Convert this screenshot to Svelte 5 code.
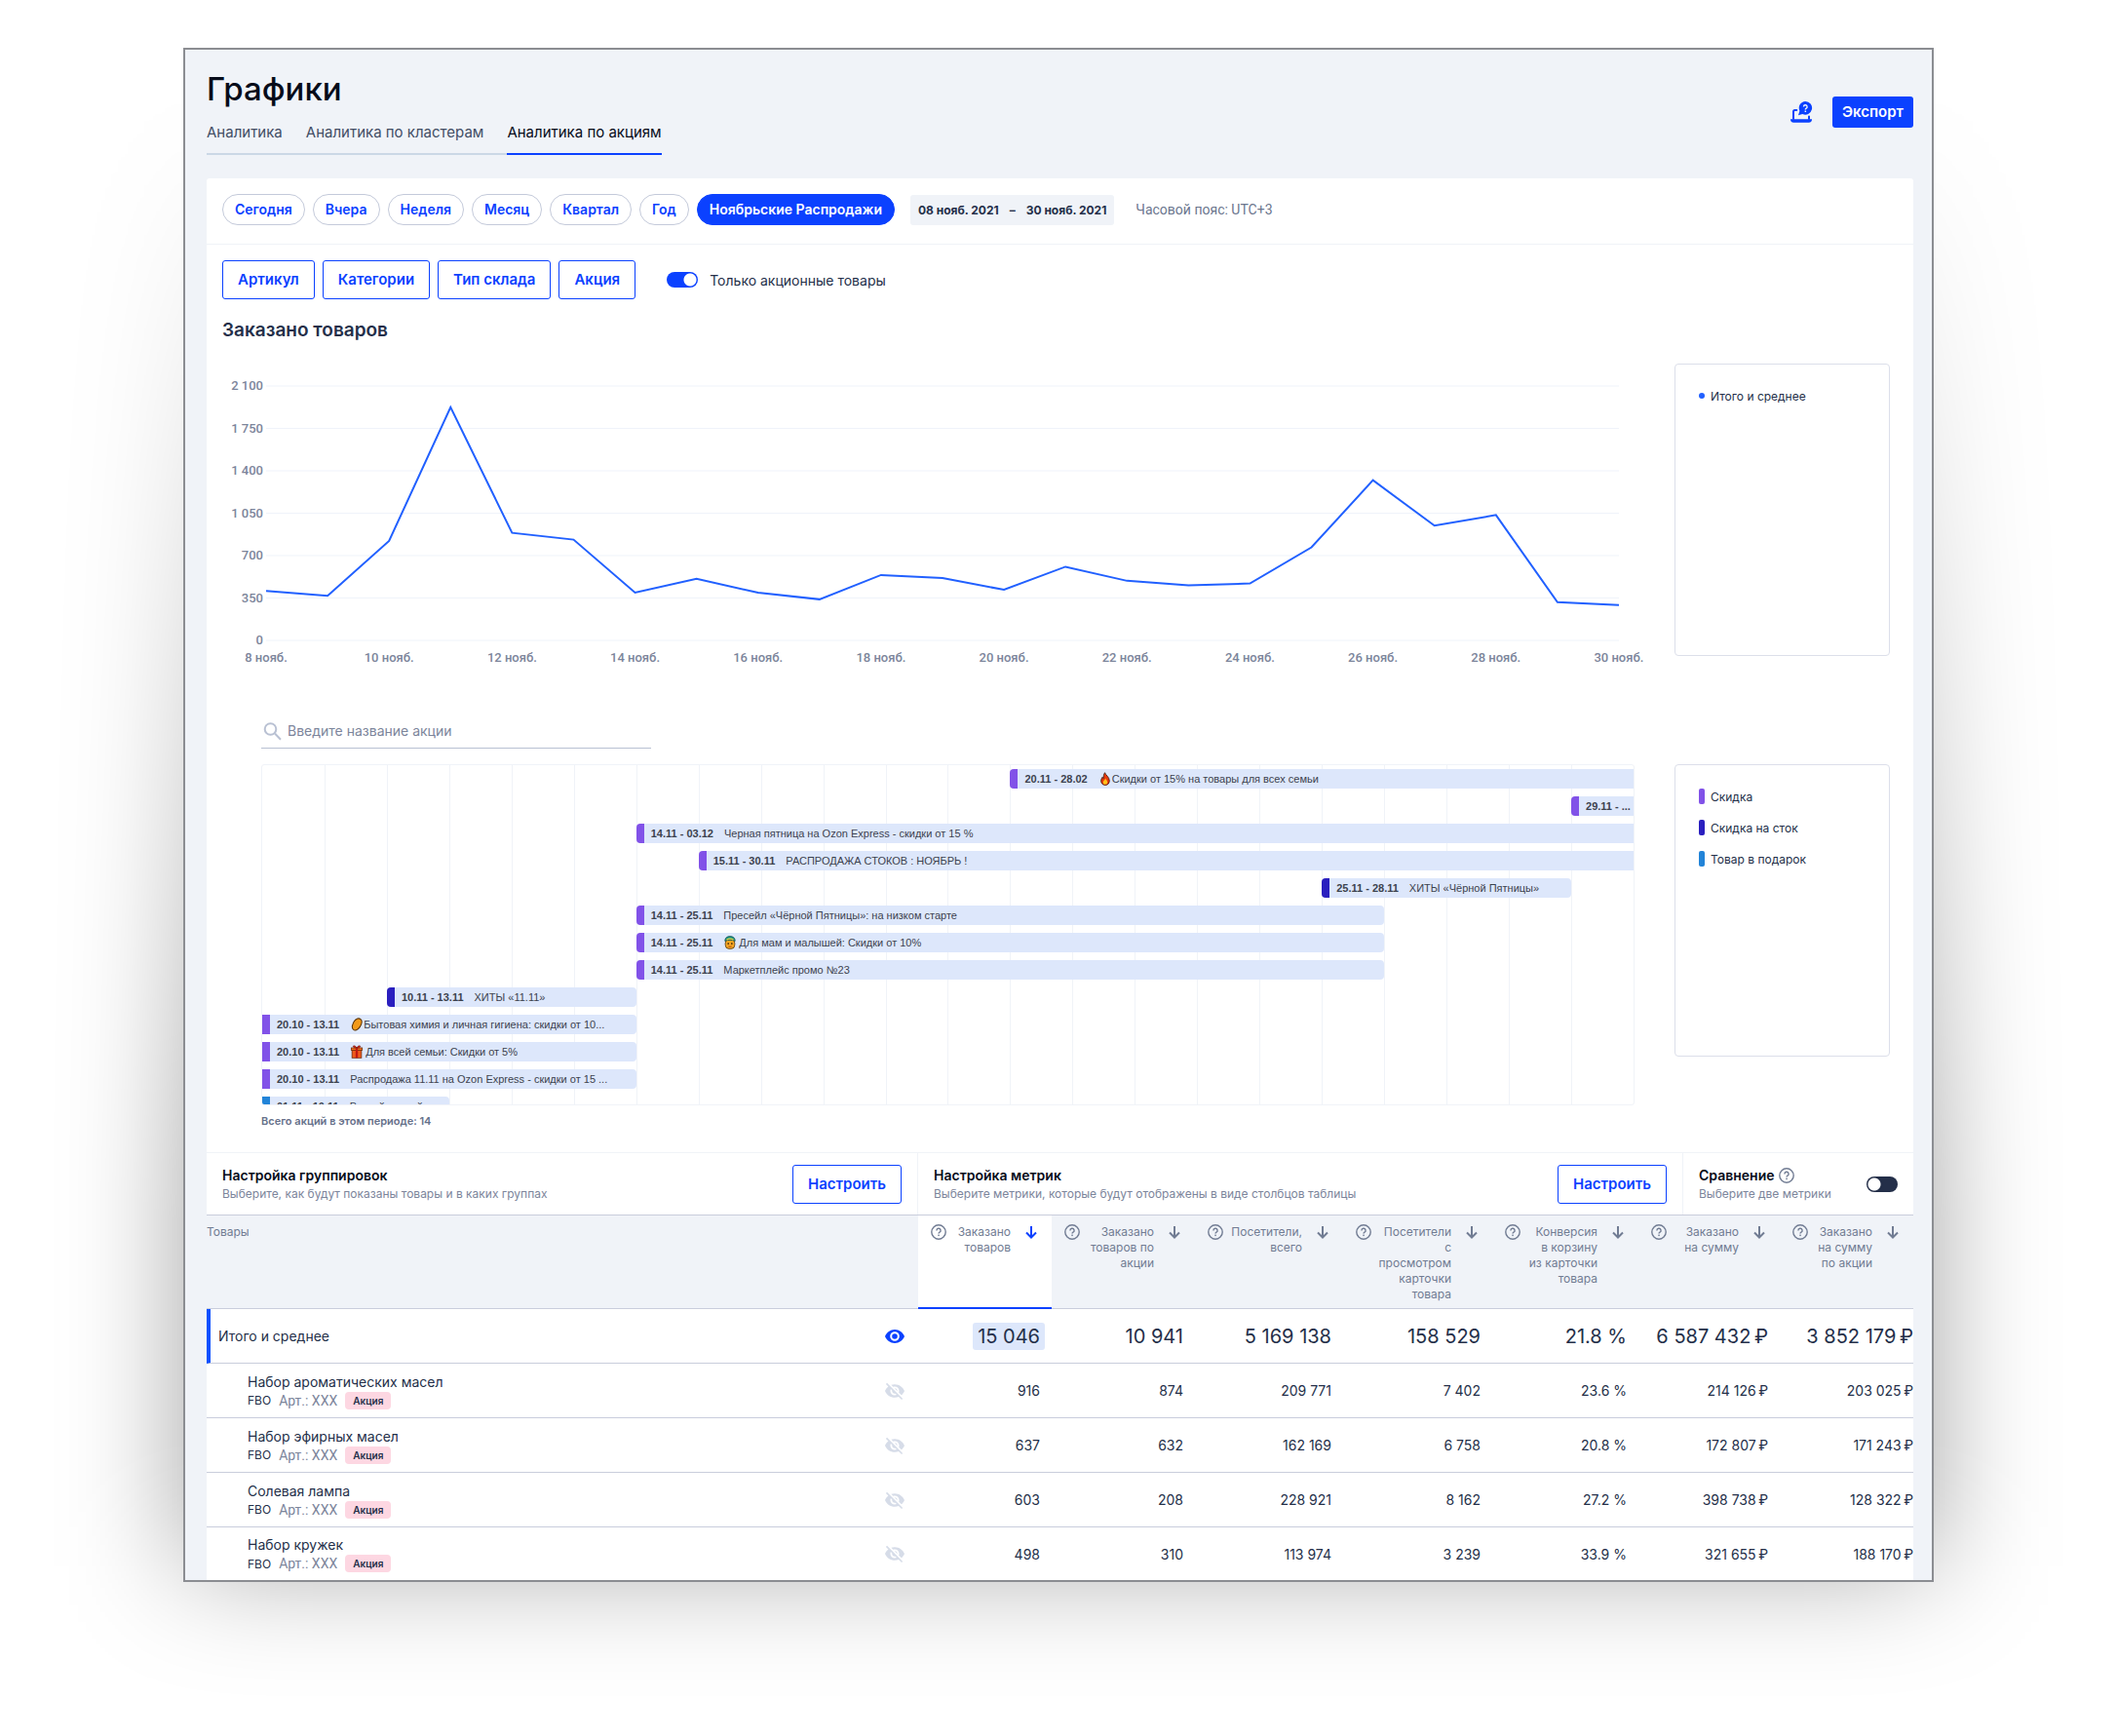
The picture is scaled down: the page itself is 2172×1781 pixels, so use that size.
<script lang="ts">
    type Kind = "sale" | "stock" | "gift";

    interface Promo {
        dates: string;
        name: string;
        from: number;
        to: number;
        kind: Kind;
        emoji?: string;
        cutLeft?: boolean;
        cutRight?: boolean;
    }

    const tabs = ["Аналитика", "Аналитика по кластерам", "Аналитика по акциям"];
    let activeTab = $state(2);

    const periods = ["Сегодня", "Вчера", "Неделя", "Месяц", "Квартал", "Год", "Ноябрьские Распродажи"];
    let activePeriod = $state(6);

    const filters = ["Артикул", "Категории", "Тип склада", "Акция"];
    let promoOnly = $state(true);
    let compare = $state(false);
    let search = $state("");

    // orders per day, 8–30 November
    const orders = [
        408, 368, 821, 1925, 888, 832, 395, 508, 394, 339, 540, 514,
        418, 608, 492, 454, 470, 768, 1322, 947, 1035, 315, 291,
    ];
    const maxOrders = 2100;
    const yTicks = ["2 100", "1 750", "1 400", "1 050", "700", "350", "0"];
    const xTicks = Array.from({ length: 12 }, (_, i) => `${8 + i * 2} нояб.`);
    const linePoints = orders
        .map((v, i) => `${(i / (orders.length - 1)) * 1000},${(1 - v / maxOrders) * 261}`)
        .join(" ");

    // from / to are grid lines, one column per day
    const promos: Promo[] = [
        { dates: "20.11 - 28.02", name: "Скидки от 15% на товары для всех семьи", from: 13, to: 23, kind: "sale", emoji: "fire", cutRight: true },
        { dates: "29.11 - ...", name: "", from: 22, to: 23, kind: "sale", cutRight: true },
        { dates: "14.11 - 03.12", name: "Черная пятница на Ozon Express - скидки от 15 %", from: 7, to: 23, kind: "sale", cutRight: true },
        { dates: "15.11 - 30.11", name: "РАСПРОДАЖА СТОКОВ : НОЯБРЬ !", from: 8, to: 23, kind: "sale", cutRight: true },
        { dates: "25.11 - 28.11", name: "ХИТЫ «Чёрной Пятницы»", from: 18, to: 22, kind: "stock" },
        { dates: "14.11 - 25.11", name: "Пресейл «Чёрной Пятницы»: на низком старте", from: 7, to: 19, kind: "sale" },
        { dates: "14.11 - 25.11", name: "Для мам и малышей: Скидки от 10%", from: 7, to: 19, kind: "sale", emoji: "baby" },
        { dates: "14.11 - 25.11", name: "Маркетплейс промо №23", from: 7, to: 19, kind: "sale" },
        { dates: "10.11 - 13.11", name: "ХИТЫ «11.11»", from: 3, to: 7, kind: "stock" },
        { dates: "20.10 - 13.11", name: "Бытовая химия и личная гигиена: скидки от 10...", from: 1, to: 7, kind: "sale", emoji: "soap", cutLeft: true },
        { dates: "20.10 - 13.11", name: "Для всей семьи: Скидки от 5%", from: 1, to: 7, kind: "sale", emoji: "gift", cutLeft: true },
        { dates: "20.10 - 13.11", name: "Распродажа 11.11 на Ozon Express - скидки от 15 ...", from: 1, to: 7, kind: "sale", cutLeft: true },
        { dates: "01.11 - 10.11", name: "Второй пресейл", from: 1, to: 4, kind: "gift", cutLeft: true },
    ];

    const kinds: { kind: Kind; label: string }[] = [
        { kind: "sale", label: "Скидка" },
        { kind: "stock", label: "Скидка на сток" },
        { kind: "gift", label: "Товар в подарок" },
    ];

    const metrics = [
        { title: "Заказано\nтоваров", width: 137 },
        { title: "Заказано\nтоваров по\nакции", width: 147 },
        { title: "Посетители,\nвсего", width: 152 },
        { title: "Посетители\nс\nпросмотром\nкарточки\nтовара", width: 153 },
        { title: "Конверсия\nв корзину\nиз карточки\nтовара", width: 150 },
        { title: "Заказано\nна сумму", width: 145 },
        { title: "Заказано\nна сумму\nпо акции", width: 137 },
    ];

    // thin space before the currency sign
    const rub = (value: string) => `${value}\u2009₽`;

    const totals = ["15 046", "10 941", "5 169 138", "158 529", "21.8 %", rub("6 587 432"), rub("3 852 179")];

    const products = [
        { name: "Набор ароматических масел", values: ["916", "874", "209 771", "7 402", "23.6 %", rub("214 126"), rub("203 025")] },
        { name: "Набор эфирных масел", values: ["637", "632", "162 169", "6 758", "20.8 %", rub("172 807"), rub("171 243")] },
        { name: "Солевая лампа", values: ["603", "208", "228 921", "8 162", "27.2 %", rub("398 738"), rub("128 322")] },
        { name: "Набор кружек", values: ["498", "310", "113 974", "3 239", "33.9 %", rub("321 655"), rub("188 170")] },
    ];
</script>

{#snippet helpIcon()}
    <svg class="help" viewBox="0 0 16 16" aria-hidden="true">
        <circle cx="8" cy="8" r="7.2" fill="none" stroke="currentColor" stroke-width="1.4" />
        <path d="M5.9 6.4a2.1 2.1 0 1 1 3.1 1.8c-.7.4-1 .7-1 1.4" fill="none" stroke="currentColor" stroke-width="1.4" />
        <rect x="7.3" y="10.6" width="1.5" height="1.5" fill="currentColor" />
    </svg>
{/snippet}

{#snippet emojiIcon(name: string)}
    <svg class="emoji {name}" viewBox="0 0 16 16" aria-hidden="true">
        {#if name === "fire"}
            <path d="M7.5.8c.6 2.6 5.4 5 5.4 9.4 0 3-2 5.2-4.9 5.2s-5-2.1-5-5c0-2 1-3.2 1.7-4.4.3 1 .7 1.5 1.3 1.7C5.7 5 6.2 2.6 7.5.8z" fill="#e8380c" stroke="#3a1408" stroke-width=".9" />
            <path d="M8.2 7.5c.5 1.6 2.3 2.5 2.3 4.6 0 1.5-1 2.6-2.5 2.6s-2.5-1-2.5-2.5c0-1.8 2-2.5 2.7-4.7z" fill="#ffc21c" />
        {:else if name === "baby"}
            <rect x="2.5" y="4" width="11" height="11.3" rx="4.5" fill="#f6a623" stroke="#4a3210" stroke-width=".9" />
            <path d="M2 6.2C2 2.5 4.5.7 8 .7s6 1.8 6 5.5c-3.5-1.6-8.5-1.6-12 0z" fill="#1f9a8c" stroke="#174b45" stroke-width=".8" />
            <path d="M4 4.7c2.5-1.3 5.5-1.3 8 0" fill="none" stroke="#e7d23c" stroke-width="1.4" />
            <circle cx="5.9" cy="9.2" r="1" fill="#3a2308" />
            <circle cx="10.1" cy="9.2" r="1" fill="#3a2308" />
            <path d="M6.2 12.3c1.2.8 2.4.8 3.6 0" fill="none" stroke="#a0350a" stroke-width="1" />
        {:else if name === "soap"}
            <path d="M2.8 9.7C3.6 6.300 6.300 2.200 9 1.200c2.600-.9 5.200 1.400 4.900 4.200-.3 3.600-3.500 8.200-6.500 9.300-2.700 1-5.300-2-4.600-5z" fill="#f29a1a" stroke="#5a3206" stroke-width="1.2" />
        {:else}
            <rect x="2.4" y="5.5" width="11.2" height="9.7" fill="#ee5a1c" stroke="#5e2408" stroke-width=".8" />
            <rect x="1.5" y="3.4" width="13" height="3" fill="#f0701e" stroke="#5e2408" stroke-width=".8" />
            <rect x="6.7" y="3.4" width="2.6" height="11.8" fill="#c01a14" />
            <path d="M8 3.4C6.5.5 3.6.3 3.8 2c.1 1 2 1.4 4.2 1.4zm0 0C9.5.5 12.4.3 12.2 2c-.1 1-2 1.4-4.2 1.4z" fill="#d9281a" stroke="#5e1408" stroke-width=".6" />
        {/if}
    </svg>
{/snippet}

<div class="page">
    <main class="window">
        <header class="header">
            <div>
                <h1>Графики</h1>
                <nav class="tabs">
                    {#each tabs as tab, i}
                        <a href="#tab-{i}" class:active={activeTab === i} onclick={() => (activeTab = i)}>{tab}</a>
                    {/each}
                </nav>
            </div>
            <div class="header-actions">
                <button class="support" aria-label="Помощь">
                    <svg viewBox="0 0 24 24" aria-hidden="true">
                        <path d="M7.3 10H5.5A1.5 1.5 0 0 0 4 11.5V19M20 16.5V19" fill="none" stroke="currentColor" stroke-width="2" stroke-linecap="round" />
                        <path d="M1 19.3h22a3.3 3.3 0 0 1-3.3 3.4H4.3A3.3 3.3 0 0 1 1 19.3z" fill="currentColor" />
                        <path d="M16.3 1a6.8 6.8 0 1 1-3 12.9L9 15.3l1.4-4.5A6.8 6.8 0 0 1 16.3 1z" fill="currentColor" />
                        <path d="M14.5 6.6a1.8 1.8 0 1 1 2.7 1.5c-.7.4-.9.7-.9 1.3" fill="none" stroke="#f0f3f8" stroke-width="1.4" />
                        <rect x="15.6" y="10.5" width="1.5" height="1.5" fill="#f0f3f8" />
                    </svg>
                </button>
                <button class="export">Экспорт</button>
            </div>
        </header>

        <section class="panel">
            <div class="periods">
                {#each periods as period, i}
                    <button class="pill" class:active={activePeriod === i} onclick={() => (activePeriod = i)}>{period}</button>
                {/each}
                <button class="range"><span>08 нояб. 2021</span><span>–</span><span>30 нояб. 2021</span></button>
                <span class="timezone">Часовой пояс: UTC+3</span>
            </div>

            <div class="filters">
                {#each filters as filter}
                    <button class="outline">{filter}</button>
                {/each}
                <label class="promo-only">
                    <input class="switch" type="checkbox" bind:checked={promoOnly} />
                    Только акционные товары
                </label>
            </div>

            <h2>Заказано товаров</h2>

            <div class="chart-row">
                <div class="chart">
                    <div class="y-axis">
                        {#each yTicks as tick}<span>{tick}</span>{/each}
                    </div>
                    <svg class="plot" viewBox="0 0 1000 261" preserveAspectRatio="none" role="img" aria-label="Заказано товаров">
                        {#each yTicks as _, i}
                            <line x1="0" x2="1000" y1={i * 43.5} y2={i * 43.5} />
                        {/each}
                        <polyline points={linePoints} />
                    </svg>
                    <div class="x-axis">
                        {#each xTicks as tick}<span>{tick}</span>{/each}
                    </div>
                </div>
                <ul class="legend">
                    <li><i class="dot"></i>Итого и среднее</li>
                </ul>
            </div>

            <label class="search">
                <svg viewBox="0 0 20 20" aria-hidden="true">
                    <circle cx="8.5" cy="8" r="5.8" />
                    <path d="M13 12.5l6 6.2" />
                </svg>
                <input type="text" placeholder="Введите название акции" aria-label="Введите название акции" bind:value={search} />
            </label>

            <div class="promo-row">
                <div class="timeline">
                    <div class="days">
                        {#each { length: 22 } as _}<i></i>{/each}
                    </div>
                    <div class="bars">
                        {#each promos as promo}
                            <div
                                class="bar {promo.kind}"
                                class:cut-left={promo.cutLeft}
                                class:cut-right={promo.cutRight}
                                style="grid-column: {promo.from} / {promo.to}"
                            >
                                <b>{promo.dates}</b>
                                {#if promo.name}
                                    <span class="bar-name">{#if promo.emoji}{@render emojiIcon(promo.emoji)}{/if}{promo.name}</span>
                                {/if}
                            </div>
                        {/each}
                    </div>
                </div>
                <ul class="legend">
                    {#each kinds as item}
                        <li><i class="swatch {item.kind}"></i>{item.label}</li>
                    {/each}
                </ul>
            </div>
            <p class="count">Всего акций в этом периоде: 14</p>

            <div class="settings">
                <div class="setting">
                    <div>
                        <h3>Настройка группировок</h3>
                        <p>Выберите, как будут показаны товары и в каких группах</p>
                    </div>
                    <button class="outline">Настроить</button>
                </div>
                <div class="setting">
                    <div>
                        <h3>Настройка метрик</h3>
                        <p>Выберите метрики, которые будут отображены в виде столбцов таблицы</p>
                    </div>
                    <button class="outline">Настроить</button>
                </div>
                <div class="setting">
                    <div>
                        <h3>Сравнение {@render helpIcon()}</h3>
                        <p>Выберите две метрики</p>
                    </div>
                    <input class="switch" type="checkbox" aria-label="Сравнение" bind:checked={compare} />
                </div>
            </div>

            <table>
                <colgroup>
                    <col />
                    {#each metrics as metric}
                        <col style="width: {metric.width}px" />
                    {/each}
                </colgroup>
                <thead>
                    <tr>
                        <th class="goods">Товары</th>
                        {#each metrics as metric, i}
                            <th class:sorted={i === 0}>
                                <div class="metric">
                                    {@render helpIcon()}
                                    <span>{metric.title}</span>
                                    <svg class="arrow" viewBox="0 0 12 14" aria-hidden="true">
                                        <path d="M6 1v11.5M1 7.5l5 5 5-5" />
                                    </svg>
                                </div>
                            </th>
                        {/each}
                    </tr>
                </thead>
                <tbody>
                    <tr class="total">
                        <td>
                            <div class="cell">
                                Итого и среднее
                                <button class="eye on" aria-label="Скрыть на графике">
                                    <svg viewBox="0 0 20 14" aria-hidden="true">
                                        <path fill-rule="evenodd" d="M10 0C5.5 0 1.6 2.9 0 7c1.6 4.1 5.5 7 10 7s8.4-2.9 10-7c-1.6-4.1-5.5-7-10-7zm0 11.8a4.8 4.8 0 1 1 0-9.6 4.8 4.8 0 0 1 0 9.6zM10 4.2a2.8 2.8 0 1 0 0 5.6 2.8 2.8 0 0 0 0-5.6z" fill="currentColor" />
                                    </svg>
                                </button>
                            </div>
                        </td>
                        {#each totals as value, i}
                            <td class="num"><span class:mark={i === 0}>{value}</span></td>
                        {/each}
                    </tr>
                    {#each products as product}
                        <tr>
                            <td>
                                <div class="cell">
                                    <div class="product">
                                        <a href="#product">{product.name}</a>
                                        <div class="meta">
                                            <span class="scheme">FBO</span>
                                            <span class="article">Арт.: XXX</span>
                                            <span class="badge">Акция</span>
                                        </div>
                                    </div>
                                    <button class="eye" aria-label="Показать на графике">
                                        <svg viewBox="1 1 22 22" aria-hidden="true">
                                            <path d="M12 7c2.76 0 5 2.24 5 5 0 .65-.13 1.26-.36 1.83l2.92 2.92c1.51-1.26 2.7-2.89 3.43-4.75-1.73-4.39-6-7.5-11-7.5-1.4 0-2.74.25-3.98.7l2.16 2.16C10.74 7.13 11.35 7 12 7zM2 4.27l2.74 2.74C3.08 8.3 1.78 10.02 1 12c1.73 4.39 6 7.5 11 7.5 1.55 0 3.03-.3 4.38-.84L19.73 22 21 20.73 3.27 3 2 4.27zM7.53 9.8l1.55 1.55c-.05.21-.08.43-.08.65 0 1.66 1.34 3 3 3 .22 0 .44-.03.65-.08l1.55 1.55c-.67.33-1.41.53-2.2.53-2.76 0-5-2.24-5-5 0-.79.2-1.53.53-2.2zm4.31-.78l3.15 3.15.02-.16c0-1.66-1.34-3-3-3l-.17.01z" fill="currentColor" />
                                        </svg>
                                    </button>
                                </div>
                            </td>
                            {#each product.values as value}
                                <td class="num">{value}</td>
                            {/each}
                        </tr>
                    {/each}
                </tbody>
            </table>
        </section>
    </main>
</div>

<style>
    :global(body) {
        margin: 0;
        background: #fff;
    }

    .page {
        position: relative;
        z-index: 0;
        padding: 49px 188px 158px;
        overflow: hidden;
        font-family: Inter, "Liberation Sans", sans-serif;
        font-size: 14px;
        color: #242f49;
    }

    .page * {
        box-sizing: border-box;
    }

    /* soft shadow that grows towards the bottom of the window */
    .page::before {
        content: "";
        position: absolute;
        inset: 49px 188px 174px;
        z-index: -1;
        background: linear-gradient(transparent 5%, rgba(0, 0, 0, 0.1) 25%, rgba(0, 0, 0, 0.36) 75%);
        filter: blur(60px);
    }

    .window {
        padding: 0 19px 0 22px;
        border: 2px solid #8b8d92;
        background: #f0f3f8;
    }

    button {
        padding: 0;
        border: 0;
        background: none;
        font-family: inherit;
        cursor: pointer;
    }

    h1,
    h2,
    h3,
    p,
    ul {
        margin: 0;
        padding: 0;
    }

    .header {
        display: flex;
        justify-content: space-between;
        height: 132px;
    }

    h1 {
        padding-top: 20px;
        font-size: 33px;
        line-height: 40px;
        font-weight: 500;
        color: #070c1a;
    }

    .tabs {
        display: flex;
        gap: 24px;
        margin-top: 13px;
        box-shadow: inset 0 -2px #cbd8e6;
    }

    .tabs a {
        height: 35px;
        font-size: 15px;
        line-height: 24px;
        color: #434e65;
        text-decoration: none;
    }

    .tabs a.active {
        color: #070c1a;
        border-bottom: 2px solid #0b41ff;
    }

    .header-actions {
        display: flex;
        gap: 20px;
        align-items: center;
        height: 128px;
    }

    .support {
        width: 24px;
        height: 24px;
        color: #0b41ff;
    }

    .support svg {
        display: block;
    }

    .export {
        height: 32px;
        padding: 0 10px 1px;
        border-radius: 3px;
        background: #0b41ff;
        font-size: 15px;
        font-weight: 600;
        color: #fff;
    }

    .panel {
        border-radius: 3px 3px 0 0;
        background: #fff;
    }

    .periods {
        display: flex;
        gap: 8px;
        align-items: center;
        padding: 16px 16px 19px;
        border-bottom: 1px solid #f0f3f8;
    }

    .pill {
        height: 32px;
        padding: 0 12px 1px;
        border: 1px solid #c4cada;
        border-radius: 16px;
        font-size: 14px;
        font-weight: 600;
        color: #0b41ff;
    }

    .pill.active {
        border-color: #0b41ff;
        background: #0b41ff;
        color: #fff;
    }

    .range {
        display: flex;
        gap: 11px;
        align-items: center;
        height: 31px;
        margin-left: 8px;
        padding: 0 8px;
        border-radius: 3px;
        background: #f0f3f8;
        font-size: 12px;
        font-weight: 700;
        color: #242f49;
    }

    .timezone {
        margin-left: 14px;
        font-family: Roboto, "Liberation Sans", sans-serif;
        color: #6b768e;
    }

    .filters {
        display: flex;
        gap: 8px;
        align-items: center;
        padding: 16px 16px 0;
    }

    .outline {
        height: 40px;
        padding: 0 15px 1px;
        border: 1px solid #0b41ff;
        border-radius: 3px;
        background: #fff;
        font-size: 15px;
        font-weight: 600;
        color: #0b41ff;
    }

    .promo-only {
        display: flex;
        gap: 12px;
        align-items: center;
        margin-left: 24px;
    }

    .switch {
        appearance: none;
        width: 32px;
        height: 16px;
        margin: 0;
        border-radius: 8px;
        background: radial-gradient(circle at 8px 8px, #fff 6px, transparent 7px) #242f49;
    }

    .switch:checked {
        background: radial-gradient(circle at 24px 8px, #fff 6px, transparent 7px) #0b41ff;
    }

    h2 {
        padding: 20px 16px 22px;
        font-size: 19px;
        line-height: 24px;
        font-weight: 600;
        color: #242f49;
    }

    .chart-row,
    .promo-row {
        display: grid;
        grid-template-columns: minmax(0, 1fr) 221px;
        padding-right: 24px;
    }

    .chart-row {
        gap: 57px;
        height: 310px;
        padding-left: 16px;
    }

    .chart {
        display: grid;
        grid-template-columns: 42px minmax(0, 1fr);
        grid-template-rows: 261px 16px;
        gap: 10px 3px;
        padding-top: 23px;
        font-family: Roboto, "Liberation Sans", sans-serif;
        font-size: 13px;
        font-weight: 500;
        color: #7c859b;
    }

    .y-axis {
        display: flex;
        flex-direction: column;
        justify-content: space-between;
        text-align: right;
    }

    .y-axis span {
        height: 0;
        line-height: 0;
    }

    .plot {
        width: 100%;
        height: 261px;
        overflow: visible;
    }

    .plot line {
        stroke: #eff3fa;
        vector-effect: non-scaling-stroke;
    }

    .plot polyline {
        fill: none;
        stroke: #2160ff;
        stroke-width: 2;
        vector-effect: non-scaling-stroke;
    }

    .x-axis {
        grid-column: 2;
        display: flex;
        justify-content: space-between;
        line-height: 16px;
    }

    .x-axis span {
        display: flex;
        justify-content: center;
        width: 0;
        white-space: nowrap;
    }

    .legend {
        height: 300px;
        padding: 24px;
        border: 1px solid #dcdfea;
        border-radius: 4px;
        list-style: none;
        font-size: 12px;
    }

    .legend li {
        display: flex;
        gap: 6px;
        align-items: center;
        height: 16px;
        margin-bottom: 16px;
    }

    .dot {
        width: 6px;
        height: 6px;
        border-radius: 50%;
        background: #2160ff;
    }

    .swatch {
        width: 6px;
        height: 16px;
        border-radius: 2px;
        background: var(--kind);
    }

    .sale {
        --kind: #8152e8;
    }

    .stock {
        --kind: #2a1fbf;
    }

    .gift {
        --kind: #2284d8;
    }

    .search {
        display: flex;
        gap: 6px;
        align-items: center;
        width: 400px;
        height: 36px;
        margin: 49px 0 16px 56px;
        padding-left: 1px;
        border-bottom: 1px solid #b9c1d3;
    }

    .search svg {
        width: 20px;
        height: 20px;
        fill: none;
        stroke: #b9c1d3;
        stroke-width: 2;
    }

    .search input {
        flex: 1;
        min-width: 0;
        padding: 0;
        border: 0;
        outline: 0;
        font: inherit;
        color: #242f49;
    }

    .search input::placeholder {
        color: #7c859b;
        opacity: 1;
    }

    .promo-row {
        gap: 41px;
        padding-left: 56px;
    }

    .timeline {
        display: grid;
        height: 350px;
        border: 1px solid #f0f3f8;
        border-radius: 3px;
        overflow: hidden;
    }

    .days,
    .bars {
        display: grid;
        grid-area: 1 / 1;
        grid-template-columns: repeat(22, minmax(0, 1fr));
    }

    .days i + i {
        border-left: 1px solid #f0f3f8;
    }

    .bars {
        grid-auto-rows: 20px;
        gap: 8px 0;
        height: 0;
        padding-top: 4px;
    }

    .bar {
        display: flex;
        gap: 11px;
        align-items: center;
        padding-left: 7px;
        border-left: 8px solid var(--kind);
        border-radius: 4px;
        background: #dde7fb;
        font-family: "Liberation Sans", Arial, sans-serif;
        font-size: 11px;
        white-space: nowrap;
        color: #3c424e;
    }

    .cut-left {
        border-top-left-radius: 0;
        border-bottom-left-radius: 0;
    }

    .cut-right {
        border-top-right-radius: 0;
        border-bottom-right-radius: 0;
    }

    .bar-name {
        display: flex;
        align-items: center;
    }

    .emoji {
        width: 14px;
        height: 14px;
    }

    .emoji.baby,
    .emoji.gift {
        margin-right: 2px;
    }

    .count {
        padding: 8px 56px 24px;
        font-size: 11px;
        line-height: 16px;
        font-weight: 600;
        color: #66718a;
    }

    .settings {
        display: grid;
        grid-template-columns: minmax(0, 1fr) 785px 237px;
        height: 64px;
        border-top: 1px solid #f0f3f8;
    }

    .setting {
        display: flex;
        justify-content: space-between;
        align-items: center;
        padding: 0 16px;
    }

    .setting + .setting {
        border-left: 1px solid #f0f3f8;
    }

    h3 {
        display: flex;
        gap: 4px;
        align-items: center;
        font-size: 14px;
        line-height: 20px;
        font-weight: 600;
        color: #070c1a;
    }

    .setting p {
        font-size: 12px;
        line-height: 18px;
        color: #7c859b;
    }

    .help {
        flex: none;
        width: 16px;
        height: 16px;
        color: #717c93;
    }

    table {
        width: 100%;
        table-layout: fixed;
        border-spacing: 0;
    }

    th {
        height: 97px;
        padding: 9px 0 0;
        border-top: 1px solid #c9cddc;
        border-bottom: 1px solid #c9cddc;
        background: #f0f3f8;
        font-size: 12px;
        line-height: 16px;
        font-weight: 400;
        text-align: right;
        vertical-align: top;
        color: #717c93;
    }

    .goods {
        text-align: left;
    }

    .sorted {
        background: #fff;
        border-bottom: 2px solid #0b41ff;
    }

    .metric {
        display: flex;
        padding: 0 15px 0 13px;
    }

    .metric span {
        flex: 1;
        white-space: pre;
    }

    .arrow {
        width: 12px;
        height: 14px;
        margin: 1px 0 0 15px;
        fill: none;
        stroke: currentColor;
        stroke-width: 2;
    }

    .sorted .arrow {
        color: #0b41ff;
    }

    td {
        height: 56px;
        padding: 0;
        border-bottom: 1px solid #c9cddc;
    }

    tr:last-child td {
        height: 54px;
        border-bottom: 0;
    }

    .num {
        padding-right: 12px;
        text-align: right;
        white-space: nowrap;
    }

    .num:last-child {
        padding-right: 0;
    }

    .total td.num {
        font-size: 20px;
    }

    .total td:first-child {
        padding-left: 8px;
        border-left: 4px solid #0b50ff;
    }

    .mark {
        display: inline-block;
        margin-right: -5px;
        padding: 0 5px;
        border-radius: 3px;
        background: #dde7fb;
        line-height: 28px;
    }

    .cell {
        display: flex;
        justify-content: space-between;
        align-items: center;
        padding-right: 14px;
    }

    .product {
        padding-left: 42px;
    }

    .product a {
        line-height: 20px;
        color: #242f49;
        text-decoration: none;
    }

    .meta {
        display: flex;
        gap: 8px;
        align-items: center;
        height: 18px;
    }

    .scheme {
        font-size: 12px;
    }

    .article {
        font-family: Roboto, "Liberation Sans", sans-serif;
        color: #7c859b;
    }

    .badge {
        padding: 0 8px;
        border-radius: 4px;
        background: #fdd7e2;
        font-size: 10px;
        line-height: 18px;
        font-weight: 600;
    }

    .eye {
        width: 20px;
        color: #d6dce8;
    }

    .eye.on {
        color: #0b41ff;
    }

    .eye svg {
        display: block;
    }
</style>
